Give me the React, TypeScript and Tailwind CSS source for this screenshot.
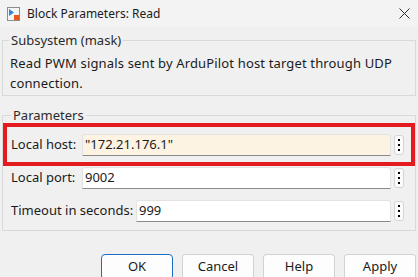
import React from "react";

const FONT = { fontFamily: '"Segoe UI", "Noto Sans", "Open Sans", sans-serif' };

const BlockIcon = () => (
  <svg width="13" height="14" viewBox="0 0 13 14" className="shrink-0">
    <rect x="0.5" y="0.5" width="12" height="13" fill="#f4f4f4" stroke="#8c8c8c" />
    <path d="M2 2 L2 9 L7 5.5 Z" fill="#2f86d6" />
    <rect x="7" y="8" width="5" height="5" fill="#e8561b" />
  </svg>
);

const CloseIcon = () => (
  <svg width="11" height="11" viewBox="0 0 11 11">
    <path d="M0.5 0.5 L10.5 10.5 M10.5 0.5 L0.5 10.5" stroke="#2b2b2b" strokeWidth="1" />
  </svg>
);

const DotsButton = () => (
  <button className="ml-[3px] flex h-[20px] w-[10px] shrink-0 flex-col items-center justify-center gap-[3px] rounded-[3px] border border-[#d4d4d4] bg-[#fbfbfb]">
    <span className="h-[2px] w-[2px] bg-black" />
    <span className="h-[2px] w-[2px] bg-black" />
    <span className="h-[2px] w-[2px] bg-black" />
  </button>
);

type FieldProps = {
  label: string;
  value: string;
  labelWidth: string;
  highlight?: boolean;
};

const Field = ({ label, value, labelWidth, highlight }: FieldProps) => (
  <div className="relative flex h-[22px] items-center">
    <span className={`${labelWidth} shrink-0 text-[13px] text-[#1b1b1b]`}>{label}</span>
    <div
      className={`flex h-[22px] flex-1 items-center rounded-t-[3px] border border-[#e3e3e3] border-b-[#8a8a8a] pl-[2px] text-[13px] text-[#1b1b1b] ${
        highlight ? "bg-[#fdf3e2]" : "bg-white"
      }`}
    >
      {value}
    </div>
    <DotsButton />
    {highlight && (
      <div className="pointer-events-none absolute -top-[11px] -bottom-[10px] -left-[8px] -right-[11px] border-4 border-[#e31b1f]" />
    )}
  </div>
);

const DialogButton = ({ label, primary }: { label: string; primary?: boolean }) => (
  <button
    className={`h-[26px] w-[72px] rounded-[4px] border bg-[#fdfdfd] text-[13px] text-[#1b1b1b] ${
      primary ? "border-[#1a6fc4]" : "border-[#d2d2d2] border-b-[#bcbcbc]"
    }`}
  >
    {label}
  </button>
);

export default function App() {
  return (
    <div className="flex h-[277px] w-[418px] flex-col overflow-hidden bg-[#f0f0f0]" style={FONT}>
      <div className="flex h-[27px] shrink-0 items-center bg-[#f3f3f3] pl-[7px] pr-[8px]">
        <BlockIcon />
        <span className="ml-[7px] text-[12px] text-[#1b1b1b]">Block Parameters: Read</span>
        <div className="ml-auto flex items-center">
          <CloseIcon />
        </div>
      </div>

      <div className="flex flex-col pl-[2px] pr-[2px] pt-[5px]">
        <fieldset className="border border-[#d9d9d9] pb-[2px] pl-[6px] pr-[6px]">
          <legend className="px-[2px] text-[13px] leading-[16px] text-[#2b2b2b]">Subsystem (mask)</legend>
          <p className="pl-[1px] pt-[5px] text-[13px] leading-[20px] tracking-[0.15px] text-[#1b1b1b]">
            Read PWM signals sent by ArduPilot host target through UDP connection.
          </p>
        </fieldset>

        <fieldset className="mt-[11px] border border-[#d9d9d9] pb-[8px] pl-[8px] pr-[11px]">
          <legend className="px-[2px] text-[13px] leading-[16px] text-[#2b2b2b]">Parameters</legend>
          <div className="flex flex-col gap-[11px] pt-[11px]">
            <Field label="Local host:" value={'"172.21.176.1"'} labelWidth="w-[71px]" highlight />
            <Field label="Local port:" value="9002" labelWidth="w-[71px]" />
            <Field label="Timeout in seconds:" value="999" labelWidth="w-[125px]" />
          </div>
        </fieldset>

        <div className="mt-[23px] flex justify-end gap-[9px]">
          <DialogButton label="OK" primary />
          <DialogButton label="Cancel" />
          <DialogButton label="Help" />
          <DialogButton label="Apply" />
        </div>
      </div>
    </div>
  );
}
